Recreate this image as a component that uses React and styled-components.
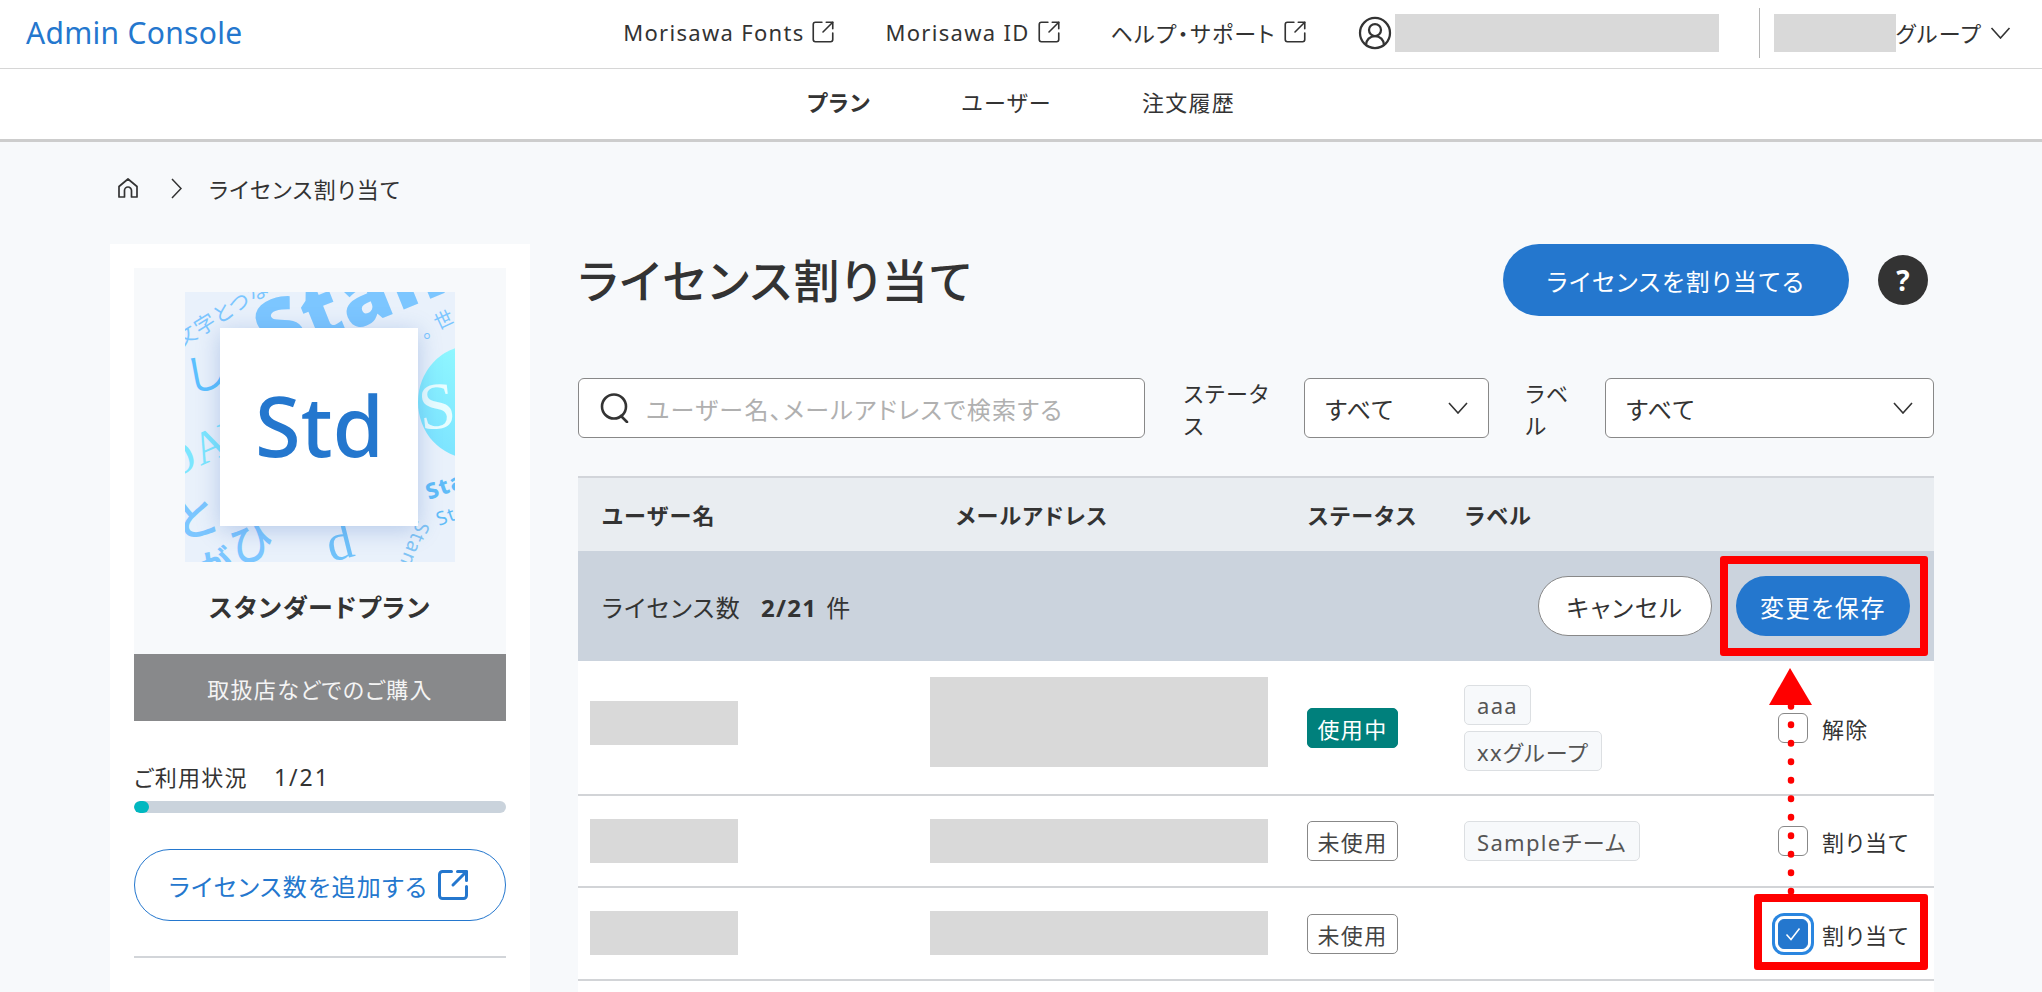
import React from "react";
import styled, { createGlobalStyle } from "styled-components";
import { CircleUserRound, SquareArrowOutUpRight } from "lucide-react";

const GlobalStyle = createGlobalStyle`
  html, body {
    margin: 0;
    padding: 0;
    background: #f7f9fb;
  }
  body {
    font-family: "Noto Sans", "Noto Sans CJK JP", sans-serif;
    font-size: 22px;
    letter-spacing: 1.3px;
    font-feature-settings: "palt";
    color: #333;
  }
  * {
    box-sizing: border-box;
  }
`;

const Page = styled.div`
  width: 2042px;
  height: 992px;
  overflow: hidden;
  background: #f7f9fb;
`;
const Header = styled.header`
  display: flex;
  justify-content: space-between;
  align-items: center;
  height: 69px;
  padding: 0 31px 2px 26px;
  background: #fff;
  border-bottom: 1px solid #d6d6d6;
`;
const Logo = styled.a`
  font-size: 30px;
  letter-spacing: 0.3px;
  color: #2477ce;
  padding-bottom: 2px;
`;
const HeaderRight = styled.div`
  display: flex;
  align-items: center;
`;
const ExtLink = styled.a`
  display: flex;
  align-items: center;
  gap: 6px;
  margin-right: 49px;
  padding-bottom: 2px;
  color: #333;
`;
const UserMask = styled.div`
  width: ${(p) => p.$w}px;
  height: 38px;
  background: #d9d9d9;
`;
const UserIcon = styled(CircleUserRound)`
  margin-right: 2px;
`;
const VLine = styled.div`
  width: 1px;
  height: 50px;
  margin: 0 14px 0 40px;
  background: #b5b5b5;
`;
const GroupName = styled.span`
  margin-right: 8px;
  padding-bottom: 2px;
`;
const Nav = styled.nav`
  display: flex;
  justify-content: center;
  align-items: center;
  gap: 90px;
  height: 73px;
  padding-bottom: 7px;
  background: #fff;
  border-bottom: 3px solid #cdcdcd;
`;
const NavItem = styled.a`
  font-weight: ${(p) => (p.$active ? 700 : 400)};
  color: #333;
`;
const Breadcrumb = styled.div`
  display: flex;
  align-items: center;
  height: 102px;
  padding: 0 0 10px 117px;
`;
const CrumbSep = styled.svg`
  margin: 0 27px 0 32px;
`;
const Main = styled.main`
  display: flex;
  gap: 48px;
  padding: 0 108px 0 110px;
`;
const Sidebar = styled.aside`
  flex: none;
  width: 420px;
  height: 748px;
  padding: 24px 24px 0;
  background: #fff;
`;
const PlanPanel = styled.div`
  display: flex;
  flex-direction: column;
  align-items: center;
  padding-top: 24px;
  background: #f7f9fb;
`;
const Thumb = styled.div`
  position: relative;
  display: flex;
  justify-content: center;
  align-items: center;
  width: 270px;
  height: 270px;
  overflow: hidden;
  background: #e9f1fb;
`;
const ThumbArt = styled.svg`
  position: absolute;
  inset: 0;
`;
const ThumbCard = styled.div`
  position: relative;
  display: flex;
  justify-content: center;
  align-items: center;
  width: 198px;
  height: 198px;
  padding: 0 0 6px 1px;
  margin-left: -2px;
  background: #fff;
  box-shadow: 0 4px 22px rgba(50, 100, 190, 0.28);
  font-size: 83px;
  font-weight: 500;
  letter-spacing: 0;
  color: #2477ce;
`;
const PlanName = styled.div`
  margin: 27px 0 29px;
  font-size: 25px;
  line-height: 36px;
  font-weight: 700;
  letter-spacing: 1.5px;
`;
const PlanSource = styled.div`
  display: flex;
  justify-content: center;
  align-items: center;
  width: 100%;
  height: 67px;
  background: #88898b;
  color: #f4f4f4;
`;
const Usage = styled.div`
  display: flex;
  gap: 26px;
  margin-top: 41px;
  line-height: 30px;
`;
const UsageCount = styled.span`
  font-size: 23px;
  letter-spacing: 2px;
`;
const ProgressTrack = styled.div`
  height: 12px;
  margin-top: 9px;
  border-radius: 6px;
  background: #cad3dc;
  overflow: hidden;
`;
const ProgressFill = styled.div`
  height: 100%;
  border-radius: 6px;
  background: #00b8c0;
`;
const AddButton = styled.a`
  display: flex;
  justify-content: center;
  align-items: center;
  gap: 7px;
  height: 72px;
  margin-top: 36px;
  border: 1.5px solid #2477ce;
  border-radius: 36px;
  background: #fff;
  color: #2477ce;
  font-size: 24px;
`;
const SideLine = styled.hr`
  margin: 35px 0 0;
  border: 0;
  border-top: 2px solid #d2d5d9;
`;
const Content = styled.section`
  flex: 1;
  min-width: 0;
`;
const TitleRow = styled.div`
  display: flex;
  justify-content: space-between;
  align-items: center;
  padding-right: 6px;
`;
const Title = styled.h1`
  margin: 0;
  font-size: 46px;
  font-weight: 500;
  letter-spacing: 2px;
  line-height: 72px;
`;
const TitleActions = styled.div`
  display: flex;
  align-items: center;
  gap: 29px;
`;
const PrimaryButton = styled.button`
  display: flex;
  justify-content: center;
  align-items: center;
  width: ${(p) => p.$w}px;
  height: ${(p) => p.$h}px;
  padding: 0;
  border: 0;
  border-radius: ${(p) => p.$h / 2}px;
  background: #2477ce;
  color: #fff;
  font: inherit;
  font-size: 24px;
  letter-spacing: 1.6px;
`;
const HelpBadge = styled.div`
  display: flex;
  justify-content: center;
  align-items: center;
  width: 50px;
  height: 50px;
  border-radius: 50%;
  background: #333;
  color: #fff;
  font-size: 28px;
  font-weight: 700;
  letter-spacing: 0;
`;
const FilterRow = styled.div`
  display: flex;
  align-items: center;
  margin: 60px 0 36px;
`;
const SearchBox = styled.div`
  display: flex;
  align-items: center;
  gap: 15px;
  width: 569px;
  height: 60px;
  padding-left: 20px;
  margin-right: 39px;
  border: 1.5px solid #888;
  border-radius: 6px;
  background: #fff;
`;
const Placeholder = styled.span`
  font-size: 24px;
  letter-spacing: 1.3px;
  color: #b0b0b0;
`;
const FilterLabel = styled.span`
  margin-right: 14px;
`;
const Select = styled.div`
  display: flex;
  justify-content: space-between;
  align-items: center;
  width: ${(p) => p.$w}px;
  height: 60px;
  padding: 0 20px;
  margin-right: ${(p) => p.$mr || 0}px;
  border: 1.5px solid #888;
  border-radius: 6px;
  background: #fff;
  font-size: 24px;
`;
const Table = styled.div`
  position: relative;
  height: 520px;
  background: #fff;
`;
const TableHead = styled.div`
  display: grid;
  grid-template-columns: 378px 352px 157px 1fr;
  align-items: center;
  height: 75px;
  padding-bottom: 2px;
  border-top: 2px solid #d2d5da;
  background: #e9edf1;
  font-weight: 700;
`;
const HeadCell = styled.div`
  padding-left: ${(p) => p.$pl || 0}px;
`;
const CountRow = styled.div`
  display: flex;
  justify-content: space-between;
  align-items: center;
  height: 110px;
  padding: 0 24px;
  background: #cbd3dd;
  font-size: 24px;
`;
const CountText = styled.div`
  display: flex;
  align-items: baseline;
`;
const CountValue = styled.b`
  margin: 0 9px 0 20px;
  font-size: 24px;
`;
const CountActions = styled.div`
  display: flex;
  gap: 24px;
`;
const CancelButton = styled.button`
  width: 174px;
  height: 60px;
  padding: 0;
  border: 1.5px solid #888;
  border-radius: 30px;
  background: #fff;
  color: #333;
  font: inherit;
  font-size: 24px;
  letter-spacing: 1.6px;
`;
const Row = styled.div`
  display: grid;
  grid-template-columns: 352px 377px 157px 314px 1fr;
  align-items: center;
  height: ${(p) => p.$h}px;
  border-bottom: 2px solid #d2d4d7;
`;
const Mask = styled.div`
  width: ${(p) => p.$w}px;
  height: ${(p) => p.$h}px;
  margin-left: ${(p) => p.$ml || 0}px;
  margin-bottom: ${(p) => p.$mb || 0}px;
  background: #d9d9d9;
`;
const Status = styled.span`
  display: flex;
  justify-content: center;
  align-items: center;
  width: 91px;
  height: 40px;
  border: 1.5px solid ${(p) => (p.$active ? "#00807c" : "#888")};
  border-radius: 5px;
  background: ${(p) => (p.$active ? "#00807c" : "#fff")};
  color: ${(p) => (p.$active ? "#fff" : "#444")};
`;
const Tags = styled.div`
  display: flex;
  flex-direction: column;
  align-items: flex-start;
  gap: 6px;
`;
const Tag = styled.span`
  display: flex;
  align-items: center;
  height: 40px;
  padding: 0 12px;
  border: 1.5px solid #dcdfe2;
  border-radius: 5px;
  background: #f7f9fb;
  color: #555;
`;
const Assign = styled.label`
  display: flex;
  align-items: center;
  gap: 14px;
`;
const CheckBox = styled.span`
  display: flex;
  justify-content: center;
  align-items: center;
  width: 30px;
  height: 30px;
  border: 1.5px solid ${(p) => (p.$checked ? "#2477ce" : "#888")};
  border-radius: 6px;
  background: ${(p) => (p.$checked ? "#2477ce" : "#fff")};
  box-shadow: ${(p) => (p.$checked ? "0 0 0 3px #fff, 0 0 0 6px #2a86e0" : "none")};
`;
const RedBox = styled.div`
  position: absolute;
  left: ${(p) => p.$x}px;
  top: ${(p) => p.$y}px;
  width: ${(p) => p.$w}px;
  height: ${(p) => p.$h}px;
  border: 8px solid #f00;
  border-radius: 3px;
`;
const ArrowMark = styled.svg`
  position: absolute;
  left: 1191px;
  top: 192px;
`;

const ExtIcon = ({ size = 26, stroke = 1.5 }) => (
  <SquareArrowOutUpRight size={size} strokeWidth={stroke} />
);

const Chevron = ({ w = 20 }) => (
  <svg width={w} height={12} viewBox="0 0 20 12" fill="none" stroke="#333" strokeWidth="1.6">
    <path d="M1 1l9 10 9-10" />
  </svg>
);

const HomeIcon = () => (
  <svg width="22" height="22" viewBox="0 0 22 22" fill="none" stroke="#333" strokeWidth="1.7" strokeLinejoin="round">
    <path d="M2 9.5 11 2l9 7.5V20h-5.5v-6.5a3.5 3.5 0 0 0-7 0V20H2z" />
  </svg>
);

const SearchIcon = () => (
  <svg width="32" height="30" viewBox="0 0 32 30" fill="none" stroke="#333" strokeWidth="2.6" strokeLinecap="round">
    <circle cx="15" cy="13.5" r="12" />
    <path d="M22 23l6 6" />
  </svg>
);

const CheckMark = () => (
  <svg width="16" height="14" viewBox="0 0 16 14" fill="none" stroke="#fff" strokeWidth="1.5">
    <path d="M1.5 7.5 6 12.5 14.5 1.5" />
  </svg>
);

// background art of the plan thumbnail, real text set at odd angles
const PlanArt = () => (
  <ThumbArt width="270" height="270" viewBox="0 0 270 270" fontFamily="'Noto Sans CJK JP', sans-serif">
    <defs>
      <linearGradient id="blob" x1="1" y1="0" x2="0.3" y2="1">
        <stop offset="0" stopColor="#eafcff" />
        <stop offset="0.35" stopColor="#8ef6ff" />
        <stop offset="1" stopColor="#7de4ff" />
      </linearGradient>
    </defs>
    <text x="84" y="72" fontSize="82" fontWeight="900" fill="#7cc6ff" transform="rotate(-22 84 72)" fontFamily="'Noto Sans', sans-serif">
      Stand
    </text>
    <text x="-4" y="56" fontSize="21" fill="#7cc6ff" transform="rotate(-32 -4 56)">
      文字とつな
    </text>
    <text x="238" y="46" fontSize="19" fill="#7cc6ff">。</text>
    <text x="253" y="38" fontSize="19" fill="#7cc6ff" transform="rotate(-25 253 38)">世</text>
    <ellipse cx="285" cy="110" rx="52" ry="56" fill="url(#blob)" />
    <text x="236" y="138" fontSize="66" fill="#e8fdff" transform="rotate(-6 236 138)" fontFamily="'Liberation Serif', serif">S</text>
    <text x="6" y="100" fontSize="42" fill="#5cc0ff" transform="rotate(-12 6 100)">し</text>
    <text x="-16" y="188" fontSize="46" fill="#7ce6ff" transform="rotate(-24 -16 188)" fontFamily="'Liberation Serif', serif">OAY</text>
    <text x="-6" y="248" fontSize="46" fontWeight="500" fill="#7cc6ff" transform="rotate(-14 -6 248)">と</text>
    <text x="18" y="290" fontSize="34" fontWeight="700" fill="#7cc6ff" transform="rotate(-18 18 290)">が</text>
    <text x="50" y="272" fontSize="44" fontWeight="500" fill="#7cc6ff" transform="rotate(-14 50 272)">ひ</text>
    <text x="244" y="208" fontSize="22" fontWeight="800" fill="#60bcf8" transform="rotate(-20 244 208)" fontFamily="'Noto Sans', sans-serif">Star</text>
    <text x="254" y="234" fontSize="19" fill="#60bcf8" transform="rotate(-20 254 234)" fontFamily="'Noto Sans', sans-serif">St</text>
    <text x="232" y="228" fontSize="20" fill="#80c4f5" transform="rotate(112 232 228)" fontFamily="'Noto Sans', sans-serif">Stand</text>
    <text x="146" y="270" fontSize="52" fill="#70c2fa" transform="rotate(-14 146 270)" fontFamily="'Liberation Serif', serif">d</text>
  </ThumbArt>
);

const App = () => (
  <Page>
    <GlobalStyle />
    <Header>
      <Logo>Admin Console</Logo>
      <HeaderRight>
        <ExtLink>Morisawa Fonts <ExtIcon /></ExtLink>
        <ExtLink>Morisawa ID <ExtIcon /></ExtLink>
        <ExtLink>ヘルプ・サポート <ExtIcon /></ExtLink>
        <UserIcon size={36} strokeWidth={1.5} />
        <UserMask $w={324} />
        <VLine />
        <UserMask $w={122} />
        <GroupName>グループ</GroupName>
        <Chevron w={21} />
      </HeaderRight>
    </Header>
    <Nav>
      <NavItem $active>プラン</NavItem>
      <NavItem>ユーザー</NavItem>
      <NavItem>注文履歴</NavItem>
    </Nav>
    <Breadcrumb>
      <HomeIcon />
      <CrumbSep width="11" height="21" viewBox="0 0 11 21" fill="none" stroke="#333" strokeWidth="1.5">
        <path d="M1 1l9 9.5L1 20" />
      </CrumbSep>
      <span>ライセンス割り当て</span>
    </Breadcrumb>
    <Main>
      <Sidebar>
        <PlanPanel>
          <Thumb>
            <PlanArt />
            <ThumbCard>Std</ThumbCard>
          </Thumb>
          <PlanName>スタンダードプラン</PlanName>
          <PlanSource>取扱店などでのご購入</PlanSource>
        </PlanPanel>
        <Usage>
          <span>ご利用状況</span>
          <UsageCount>1/21</UsageCount>
        </Usage>
        <ProgressTrack>
          <ProgressFill style={{ width: `${(1 / 25) * 100}%` }} />
        </ProgressTrack>
        <AddButton>
          ライセンス数を追加する
          <ExtIcon size={36} stroke={2} />
        </AddButton>
        <SideLine />
      </Sidebar>
      <Content>
        <TitleRow>
          <Title>ライセンス割り当て</Title>
          <TitleActions>
            <PrimaryButton $w={346} $h={72}>ライセンスを割り当てる</PrimaryButton>
            <HelpBadge>?</HelpBadge>
          </TitleActions>
        </TitleRow>
        <FilterRow>
          <SearchBox>
            <SearchIcon />
            <Placeholder>ユーザー名、メールアドレスで検索する</Placeholder>
          </SearchBox>
          <FilterLabel>ステータス</FilterLabel>
          <Select $w={185} $mr={37}>
            すべて
            <Chevron />
          </Select>
          <FilterLabel>ラベル</FilterLabel>
          <Select $w={330}>
            すべて
            <Chevron />
          </Select>
        </FilterRow>
        <Table>
          <TableHead>
            <HeadCell $pl={24}>ユーザー名</HeadCell>
            <HeadCell>メールアドレス</HeadCell>
            <HeadCell>ステータス</HeadCell>
            <HeadCell>ラベル</HeadCell>
          </TableHead>
          <CountRow>
            <CountText>
              ライセンス数
              <CountValue>2/21</CountValue>
              件
            </CountText>
            <CountActions>
              <CancelButton>キャンセル</CancelButton>
              <PrimaryButton $w={174} $h={60}>変更を保存</PrimaryButton>
            </CountActions>
          </CountRow>
          <Row $h={135}>
            <Mask $w={148} $h={44} $ml={12} $mb={10} />
            <Mask $w={338} $h={90} $mb={12} />
            <Status $active>使用中</Status>
            <Tags>
              <Tag>aaa</Tag>
              <Tag>xxグループ</Tag>
            </Tags>
            <Assign>
              <CheckBox />
              解除
            </Assign>
          </Row>
          <Row $h={92}>
            <Mask $w={148} $h={44} $ml={12} />
            <Mask $w={338} $h={44} />
            <Status>未使用</Status>
            <Tags>
              <Tag>Sampleチーム</Tag>
            </Tags>
            <Assign>
              <CheckBox />
              割り当て
            </Assign>
          </Row>
          <Row $h={93}>
            <Mask $w={148} $h={44} $ml={12} $mb={2} />
            <Mask $w={338} $h={44} $mb={2} />
            <Status>未使用</Status>
            <div />
            <Assign>
              <CheckBox $checked>
                <CheckMark />
              </CheckBox>
              割り当て
            </Assign>
          </Row>
          <RedBox $x={1142} $y={80} $w={208} $h={100} />
          <RedBox $x={1176} $y={418} $w={174} $h={76} />
          <ArrowMark width="44" height="228" viewBox="0 0 44 228" fill="#f00">
            <path d="M21 0 43 37H0z" />
            <path d="M22 38V224" stroke="#f00" strokeWidth="6.5" strokeLinecap="round" strokeDasharray="0.6 17.9" />
          </ArrowMark>
        </Table>
      </Content>
    </Main>
  </Page>
);

export default App;
